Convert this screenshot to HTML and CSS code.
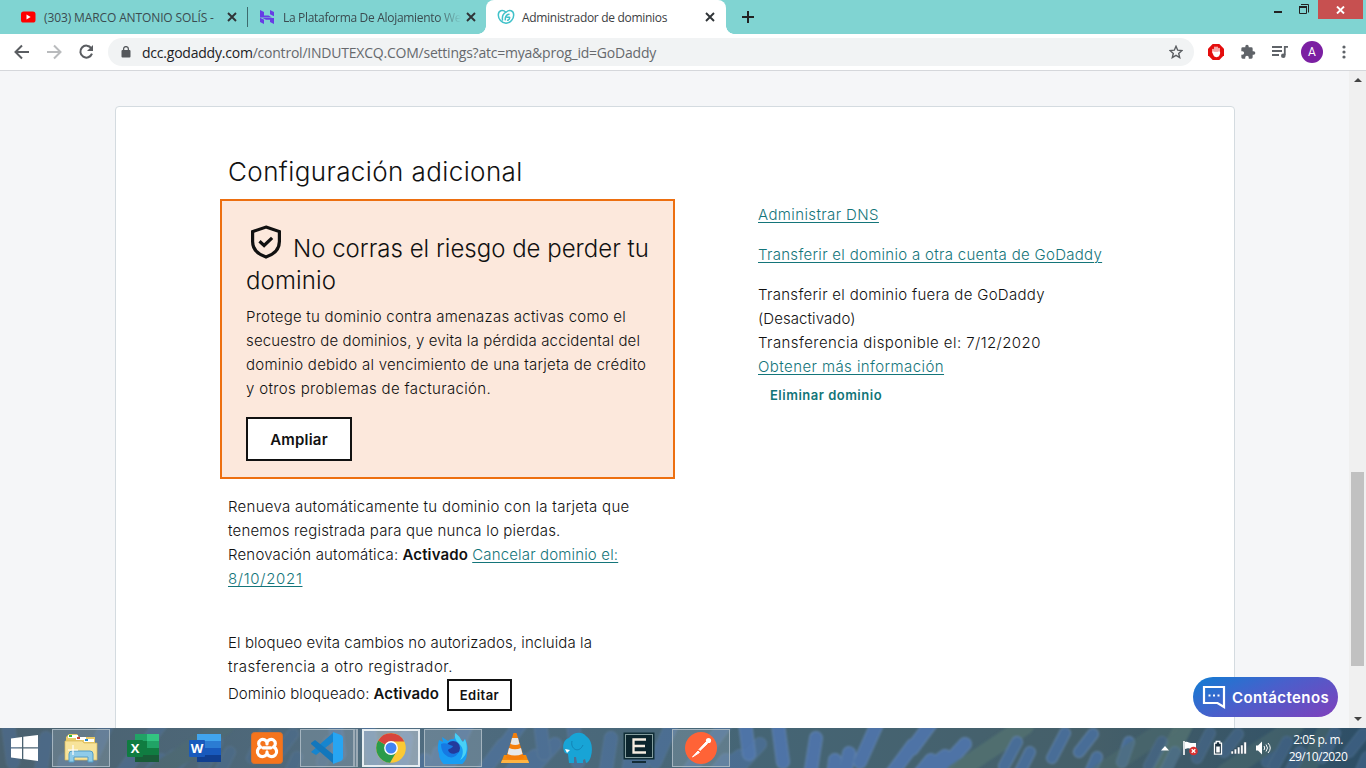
FILE: index.html
```html
<!DOCTYPE html>
<html lang="es">
<head>
<meta charset="utf-8">
<title>Administrador de dominios</title>
<link rel="stylesheet" href="styles.css">
</head>
<body>
<div class="screen">
  <header class="tabstrip">
    <div class="tab tab-one">
      <svg class="fav" width="16" height="16" viewBox="0 0 16 16"><rect x="1" y="2.500" width="14.500" height="11" rx="2.600" fill="#f00"/><path d="M6.500 5.600v4.800L10.700 8z" fill="#fff"/></svg>
      <span class="tab-title t1">(303) MARCO ANTONIO SOLÍS -</span>
      <svg class="x" width="10" height="10" viewBox="0 0 10 10"><path d="M1 1l8 8M9 1l-8 8"/></svg>
    </div>
    <div class="tab tab-two">
      <svg class="fav" width="16" height="16" viewBox="0 0 16 16" fill="#673de6"><path d="M1 1l4 2v3.500h4.500L13 8.400H1zM11 1l4 2v4.300l-4-2zM1 8.800l4 2V15l-4-2zM3.500 8.900H15V15l-4-2v-2.300H7z"/></svg>
      <span class="tab-title fade t2">La Plataforma De Alojamiento We</span>
      <svg class="x" width="10" height="10" viewBox="0 0 10 10"><path d="M1 1l8 8M9 1l-8 8"/></svg>
    </div>
    <div class="tab tab-active">
      <svg class="fav" width="18" height="16" viewBox="0 0 18 16" fill="none" stroke="#3fc1c9" stroke-width="1.500" stroke-linecap="round" stroke-linejoin="round"><path d="M9 14.300C4.500 14 1.300 10 1.300 6 1.300 1.500 5.500.200 9 3.200 12.500.200 16.700 1.500 16.700 6c0 4-3.200 8-7.700 8.300M5.500 11C5 7.500 6.500 4.500 9 3.200M12 5.300C9.300 5.500 8 8 8.300 10.800M10 8.200h2.600c.2 1.600-.6 2.700-2 3"/></svg>
      <span class="tab-title t3">Administrador de dominios</span>
      <svg class="x" width="10" height="10" viewBox="0 0 10 10"><path d="M1 1l8 8M9 1l-8 8"/></svg>
    </div>
    <svg class="plus" width="12" height="12" viewBox="0 0 12 12"><path d="M6 0v12M0 6h12" stroke="#222" stroke-width="2"/></svg>
    <div class="winctl">
      <svg width="36" height="19" viewBox="0 0 36 19" fill="none" stroke="#222"><path d="M0 12h8" stroke-width="2"/><path d="M27 4.500h7.500v8M25.500 6.500h7v7h-7z"/><path d="M25 7h8" stroke-width="2"/></svg>
      <div class="winclose"><svg width="9" height="8" viewBox="0 0 9 8"><path d="M1 .5l7 7M8 .5l-7 7" stroke="#fff" stroke-width="1.900"/></svg></div>
    </div>
  </header>

  <div class="toolbar">
    <svg class="nav" width="16" height="16" viewBox="0 0 16 16"><path d="M15 8H2M8 1.500L1.500 8 8 14.500" fill="none" stroke="#5a5d61" stroke-width="2"/></svg>
    <svg class="nav" width="16" height="16" viewBox="0 0 16 16"><path d="M1 8h13M8 1.500L14.500 8 8 14.500" fill="none" stroke="#b9bbbd" stroke-width="2"/></svg>
    <svg class="nav" width="16" height="16" viewBox="0 0 16 16"><path d="M13.300 4.200A6 6 0 1 0 14 9.700" fill="none" stroke="#5a5d61" stroke-width="2"/><path d="M15 1v6H9z" fill="#5a5d61"/></svg>
    <div class="omnibox">
      <svg width="10" height="12" viewBox="0 0 10 12"><rect x=".5" y="4" width="9" height="7.500" rx="1" fill="#55585c"/><path d="M2.600 4.500V3a2.400 2.400 0 0 1 4.800 0v1.500" fill="none" stroke="#55585c" stroke-width="1.300"/></svg>
      <span class="url"><b>dcc.godaddy.com</b>/control/INDUTEXCQ.COM/settings?atc=mya&amp;prog_id=GoDaddy</span>
      <svg class="star" width="14" height="14" viewBox="0 0 14 14"><path d="M7 1.300l1.700 3.900 4.200.4-3.200 2.800 1 4.200L7 10.400l-3.700 2.200 1-4.200L1.100 5.600l4.200-.4z" fill="none" stroke="#5a5d61" stroke-width="1.400"/></svg>
    </div>
    <div class="exts">
      <svg width="16" height="16" viewBox="0 0 16 16"><path d="M4.700 0h6.600L16 4.700v6.600L11.300 16H4.700L0 11.300V4.700z" fill="#e40d0d"/><path d="M5 8.500V5.500M7 7V3.200M9 7V3.200M11 8V4.500" stroke="#fff" stroke-width="1.300" stroke-linecap="round"/><path d="M4.400 7.500h7.300c.8.500.6 2.500-.6 4.500-1 1.500-4.200 1.500-5.200 0-1-1.500-1.500-3-1.500-4.500z" fill="#fff"/></svg>
      <svg width="16" height="16" viewBox="0 0 24 24"><path fill="#5f6368" d="M20.500 11H19V7a2 2 0 0 0-2-2h-4V3.500a2.500 2.500 0 0 0-5 0V5H4a2 2 0 0 0-2 2v3.800h1.500a2.700 2.700 0 0 1 0 5.400H2V20a2 2 0 0 0 2 2h3.800v-1.500a2.700 2.700 0 0 1 5.400 0V22H17a2 2 0 0 0 2-2v-4h1.500a2.500 2.500 0 0 0 0-5z"/></svg>
      <svg width="16" height="14" viewBox="0 0 16 14"><path d="M0 2h10M0 6h10M0 10h7M12.800 10V1.800H16" fill="none" stroke="#5f6368" stroke-width="1.800"/><circle cx="11.300" cy="10.700" r="2.300" fill="#5f6368"/></svg>
      <span class="avatar">A</span>
      <svg class="dots" width="4" height="14" viewBox="0 0 4 14" fill="#5f6368"><circle cx="2" cy="2" r="1.600"/><circle cx="2" cy="7" r="1.600"/><circle cx="2" cy="12" r="1.600"/></svg>
    </div>
  </div>

  <main class="viewport">
    <div class="page">
      <section class="card">
        <div class="col-left">
          <h1>Configuración adicional</h1>
          <div class="callout">
            <h2><svg class="shield" width="32" height="34" viewBox="0 0 32 34" fill="none" stroke="#111" stroke-width="3.200"><path d="M16 2.100L29.400 6.600v9.800c0 7.400-5.200 12.800-13.400 15.600C7.800 29.200 2.600 23.800 2.600 16.400V6.600z"/><path d="M9.500 16.300l4.600 4.200 8-7.700"/></svg>No corras el riesgo de perder tu<br><span class="h2b">dominio</span></h2>
            <p><span class="p1">Protege tu dominio contra amenazas activas como el</span><br><span class="p2">secuestro de dominios, y evita la pérdida accidental del</span><br><span class="p3">dominio debido al vencimiento de una tarjeta de crédito</span><br><span class="p4">y otros problemas de facturación.</span></p>
            <button class="btn-lg">Ampliar</button>
          </div>
          <p class="renew"><span class="r1">Renueva automáticamente tu dominio con la tarjeta que</span><br><span class="r2">tenemos registrada para que nunca lo pierdas.</span><br><span class="r3">Renovación automática:</span> <b class="r4">Activado</b> <a class="r5">Cancelar dominio el:</a><br><a class="r6">8/10/2021</a></p>
          <p class="lock"><span class="l1">El bloqueo evita cambios no autorizados, incluida la</span><br><span class="l2">trasferencia a otro registrador.</span></p>
          <div class="lockrow"><span class="l3">Dominio bloqueado:</span><b class="r4">Activado</b><button class="btn-sm">Editar</button></div>
        </div>
        <div class="col-right">
          <p><a class="d1">Administrar DNS</a></p>
          <p><a class="d2">Transferir el dominio a otra cuenta de GoDaddy</a></p>
          <p class="last"><span class="d2">Transferir el dominio fuera de GoDaddy</span><br><span class="d4">(Desactivado)</span><br><span class="d5">Transferencia disponible el: 7/12/2020</span><br><a class="d5">Obtener más información</a></p>
          <span class="del">Eliminar dominio</span>
        </div>
      </section>
      <div class="contact"><svg width="24" height="24" viewBox="0 0 24 24" fill="none" stroke="#fff" stroke-width="2.200"><path d="M22 2H2v16h13.500l6.500 4z"/><path d="M6.500 10.500h2M11 10.500h2M15.500 10.500h2" stroke-width="2"/></svg><span>Contáctenos</span></div>
    </div>
    <div class="scrollbar"><i class="arrow up"></i><div class="thumb"></div><i class="arrow down"></i></div>
  </main>

  <footer class="taskbar">
    <svg class="reef" width="1366" height="40" viewBox="0 0 1366 40">
      <defs>
        <filter id="soft" x="-5%" y="-50%" width="110%" height="200%"><feGaussianBlur stdDeviation=".8"/></filter>
        <linearGradient id="sea"><stop offset="0" stop-color="#4a616f"/><stop offset=".3" stop-color="#506c80"/><stop offset=".55" stop-color="#456575"/><stop offset=".8" stop-color="#455f69"/><stop offset="1" stop-color="#2d4e66"/></linearGradient>
        <g id="fronds" fill="none" stroke-linecap="round"><path stroke="#6587b2" stroke-width="14" d="M5-6l4 32M38-4l5 38M76 10l-6 38M95 32l-3 24M109 25l-5 26M138-6l-18 40M173 17l-26 35M192-6l-20 27M191 32l-14 17M225 16l-24 26M205 28l-26 20"/><path stroke="#4f76ac" stroke-width="12" d="M5-6l4 32M38-4l5 38M76 10l-6 38M95 32l-3 24M109 25l-5 26M138-6l-18 40M173 17l-26 35M192-6l-20 27M191 32l-14 17M225 16l-24 26M205 28l-26 20"/></g>
        <g id="sparse" fill="none" stroke-linecap="round"><path stroke="#517070" stroke-width="18" d="M-25 45L45-2M180 45l25-50"/><path stroke="#6688ad" stroke-width="12" d="M37 14L24 38M50 24L40 44M85 5L72 30M113 6l-14 18M117 29l-9 20M149 14l-7 20"/><path stroke="#496f9c" stroke-width="10" d="M37 14L24 38M50 24L40 44M85 5L72 30M113 6l-14 18M117 29l-9 20M149 14l-7 20"/></g>
      </defs>
      <rect width="1366" height="40" fill="url(#sea)"/>
      <g filter="url(#soft)">
      <g opacity=".35"><use href="#fronds" x="-30"/><use href="#sparse" x="180"/></g>
      <g opacity=".5"><use href="#fronds" x="330"/><use href="#fronds" x="535"/></g>
      <use href="#fronds" x="740" opacity=".9"/><use href="#sparse" x="980" opacity=".9"/>
      <g opacity=".45"><use href="#sparse" x="1125"/><use href="#sparse" x="1250"/></g>
      </g>
    </svg>
    <div class="start"><svg width="27" height="26" viewBox="0 0 27 26" fill="#fff"><path d="M0 3.500L11 2v10.300H0zM12.300 1.800L27 0v12.300H12.300zM0 13.500h11V24L0 22.500zM12.300 13.500H27V26l-14.700-1.900z"/></svg></div>
    <div class="tasks">
      <div class="task open"><svg width="34" height="32" viewBox="0 0 34 32"><path d="M2 5l3-3h8l2 3h16v23H2z" fill="#e9cb68"/><path d="M4 3h10v3H4z" fill="#fff"/><path d="M5 3h3v2H5z" fill="#3b3"/><path d="M12 5h10v3H12z" fill="#fff"/><path d="M13 5h3v2h-3z" fill="#c43"/><path d="M20 7h10v3H20z" fill="#fff"/><path d="M21 7h3v2h-3z" fill="#28c"/><path d="M1 9h17l2 2h13v17H1z" fill="#f7e39a" stroke="#d9b85a" stroke-width=".7"/><path d="M5 30v-8q0-3 3-3h18q3 0 3 3v8h-5v-5H10v5z" fill="#8fcbe8" stroke="#539cc6"/><path d="M9 13v10M4 18h10" stroke="#fff" stroke-width="1.200"/></svg></div>
      <div class="task"><svg width="32" height="30" viewBox="0 0 32 30"><path d="M8 1h12v9H8z" fill="#21a366"/><path d="M20 1h12v7H20z" fill="#33c481"/><path d="M8 8h12v14H8z" fill="#107c41"/><path d="M20 8h12v7H20z" fill="#21a366"/><path d="M20 15h12v7H20z" fill="#107c41"/><path d="M8 22h24v7H8z" fill="#185c37"/><rect y="7" width="16" height="17" rx="1" fill="#107c41"/><text x="8" y="20" text-anchor="middle" class="office">X</text></svg></div>
      <div class="task"><svg width="32" height="30" viewBox="0 0 32 30"><path d="M8 1h24v7H8z" fill="#41a5ee"/><path d="M8 8h24v7H8z" fill="#2b7cd3"/><path d="M8 15h24v7H8z" fill="#185abd"/><path d="M8 22h24v7H8z" fill="#103f91"/><rect y="7" width="16" height="17" rx="1" fill="#185abd"/><text x="8" y="20" text-anchor="middle" class="office">W</text></svg></div>
      <div class="task"><svg width="32" height="32" viewBox="0 0 32 32"><rect x=".5" y=".5" width="31" height="31" rx="3" fill="#f5741c" stroke="#d7722e"/><path d="M9.500 15a4.200 4.200 0 1 1 6.500-4.200A4.200 4.200 0 1 1 22.500 15M12 15.800h8M9.500 15a5 5 0 1 0 6.500 6.500A5 5 0 1 0 22.500 15M16 10.800v1.200M16 20v1.500" fill="none" stroke="#fff" stroke-width="3.200" stroke-linecap="round"/></svg></div>
      <div class="task open stacked"><svg width="32" height="32" viewBox="0 0 32 32"><path d="M23 0v9L5 23l-5-3z" fill="#1685cf"/><path d="M0 11l4-3 19 15v9L0 12z" fill="#1277bd"/><path d="M22 0l8 3q2 1 2 3v20q0 2-2 3l-8 3z" fill="#27a5f2"/></svg></div>
      <div class="task open current"><svg width="30" height="30" viewBox="0 0 30 30"><circle cx="15" cy="15" r="14.800" fill="#fbc934"/><path d="M15 15L2.200 7.600A14.800 14.800 0 0 0 14 29.800l7-12z" fill="#2b9b4b"/><path d="M15 15L2.200 7.600A14.800 14.800 0 0 1 28.300 8.500H15z" fill="#d7443c"/><circle cx="15" cy="15" r="6.900" fill="#fff"/><circle cx="15" cy="15" r="5.500" fill="#4284f3"/></svg></div>
      <div class="task open"><svg width="32" height="32" viewBox="0 0 32 32"><path d="M2 8l4 2-1-5 6 4c2-2 4-2 6-2l2-6 4 6 3 3 2-3c3 6 3 10 2 14A14 14 0 0 1 2 22C0 17 1 12 2 8z" fill="#199df3"/><path d="M18 1c6 4 5 6 8 9l2-3c4 10 1 18-5 21 3-4 4-10 1-14-3-4-7-6-6-13z" fill="#48d0f5"/><circle cx="16" cy="16" r="7" fill="#233a9c"/><path d="M4 12c4-2 8 1 12 2-1 3-4 2-5 4 1 4 6 5 10 2-1 5-7 7-11 4-4-2-6-7-6-12z" fill="#1679e3"/></svg></div>
      <div class="task"><svg width="28" height="32" viewBox="0 0 28 32"><path d="M3 23h22l3 8H0z" fill="#f58a0b"/><path d="M1 28h26l1 3H0z" fill="#ffb443"/><path d="M12.500 1h3L23 26q-9 4-18 0z" fill="#f57f0b"/><path d="M11 6h6l1.500 6q-4 2-9 0zM8 16q6 2.500 12 0l1.500 6q-8 3-15 0z" fill="#e7e8e9"/></svg></div>
      <div class="task"><svg width="31" height="32" viewBox="0 0 31 32"><path d="M7 6C11 0 20-1 24 4c6 4 7 13 5 20-1 4-3 7-5 7l-1-4-2 1v3h-6l-1-6h-2v6H7L6 22l-3-1C-1 15 2 7 7 6z" fill="#18a4d6"/><path d="M10 9c-2 8 7 13 11 4" fill="none" stroke="#1383b5"/><path d="M3 17l5 1-3 3z" fill="#fff"/></svg></div>
      <div class="task"><svg width="32" height="32" viewBox="0 0 32 32"><rect x=".5" y=".5" width="31" height="27" fill="#102e37"/><rect x="2.500" y="2.500" width="27" height="23" fill="#0b252d" stroke="#849d9e"/><path d="M23 7.500H10.500v13H23M10.500 14H22" fill="none" stroke="#f5ece0" stroke-width="2.300"/><path d="M9 30h14" stroke="#142d37" stroke-width="2"/></svg></div>
      <div class="task open"><svg width="32" height="32" viewBox="0 0 32 32"><circle cx="16" cy="16" r="16" fill="#ff6337"/><path d="M7.500 25l5.500-6 1.500 1.500zM14 17.500l7-7.500 1.500 1.500-7.500 7z" fill="#fff" stroke="#fff"/><circle cx="23.500" cy="8.500" r="2.600" fill="#fff"/></svg></div>
    </div>
    <div class="tray">
      <svg width="8" height="5" viewBox="0 0 8 5"><path d="M0 4.500L4 0l4 4.500z" fill="#fff"/></svg>
      <svg class="flag" width="16" height="16" viewBox="0 0 16 16"><path d="M1 1v14" stroke="#fff" stroke-width="1.600"/><path d="M2 2c3-1 4 1 6 1h5v6H8C6 8 5 8 2 9z" fill="#fff"/><circle cx="10.500" cy="11" r="4.300" fill="#d93030"/><path d="M8.700 9.200l3.600 3.600M12.300 9.200l-3.600 3.600" stroke="#fff" stroke-width="1.300"/></svg>
      <svg class="battery" width="10" height="16" viewBox="0 0 10 16"><path d="M3.200 1.500h3.600v1.700H8.500v11h-7v-11h1.700z" fill="#1c313f" stroke="#fff" stroke-width="1.300"/><path d="M3.200 6.500h3.600V12.500H3.200z" fill="#fff"/></svg>
      <svg class="signal" width="16" height="12" viewBox="0 0 16 12" fill="#fff" stroke="#223746" stroke-width=".5"><path d="M0 9h2.500v3H0zM3.200 7h2.500v5H3.200zM6.400 5h2.500v7H6.400zM9.600 3h2.500v9H9.600zM12.800 0h2.700v12h-2.700z"/></svg>
      <svg class="volume" width="16" height="14" viewBox="0 0 16 14"><path d="M1 4.500h2L7 .500v13L3 9.500H1z" fill="#fff"/><path d="M9 5q1.500 2 0 4M11 3.500q3 3.500 0 7M13 2q4.500 5 0 10" fill="none" stroke="#fff" stroke-width="1"/></svg>
      <div class="clock"><span>2:05 p. m.</span><span>29/10/2020</span></div>
    </div>
  </footer>
</div>
</body>
</html>
```
FILE: styles.css
```css
* { box-sizing: border-box; }
body { margin: 0; }
svg { flex: none; display: block; }
.screen { width: 1366px; height: 768px; display: flex; flex-direction: column; overflow: hidden; font-family: Inter, "Liberation Sans", sans-serif; color: #111; }

/* Browser chrome */
.tabstrip { height: 34px; flex: none; background: #80d4d2; display: flex; align-items: stretch; font: 12px "Open Sans", sans-serif; }
.tab { display: flex; align-items: center; height: 34px; }
.tab .x { margin-left: auto; stroke: #2f3437; stroke-width: 1.900; }
.tab-title { white-space: nowrap; color: #3b4b50; letter-spacing: -.31px; }
.tab-one .t1 { letter-spacing: -.12px; }
.tab-one { width: 248px; padding: 0 11px 0 20px; background: linear-gradient(#3d6b6e, #3d6b6e) right 7px / 1px 20px no-repeat; }
.tab-one .tab-title, .tab-two .tab-title { margin-left: 8px; }
.tab-two { width: 238px; padding: 0 10px 0 11px; }
.fade { -webkit-mask-image: linear-gradient(90deg, #000 155px, transparent 178px); mask-image: linear-gradient(90deg, #000 155px, transparent 178px); }
.tab-active { width: 240px; padding: 0 11px; background: #fff; border-radius: 8px 8px 0 0; position: relative; }
.tab-active::before, .tab-active::after { content: ""; position: absolute; bottom: 0; width: 8px; height: 8px; }
.tab-active::before { left: -8px; background: radial-gradient(circle at 0 0, transparent 7.500px, #fff 8px); }
.tab-active::after { right: -8px; background: radial-gradient(circle at 100% 0, transparent 7.500px, #fff 8px); }
.tab-active .tab-title { margin-left: 7px; color: #3c4043; }
.plus { margin: 11px 0 0 16px; }
.winctl { margin-left: auto; display: flex; padding-right: 3px; }
.winclose { width: 45px; height: 19px; margin-left: 8px; background: #c75050; display: flex; align-items: center; justify-content: center; }
.toolbar { height: 37px; flex: none; border-bottom: 1px solid #d5d7db; background: #fff; display: flex; align-items: center; padding-left: 14px; }
.nav { margin-right: 16px; }
.omnibox { width: 1086px; height: 28px; margin-left: -2px; border-radius: 14px; background: #f1f3f4; display: flex; align-items: center; padding: 0 11px 0 13px; }
.url { margin-left: 11px; font: 14px "Open Sans", sans-serif; letter-spacing: -.22px; color: #66696d; white-space: nowrap; }
.url b { font-weight: 400; color: #202124; }
.star { margin-left: auto; }
.exts { display: flex; align-items: center; gap: 16px; margin-left: 14px; }
.avatar { width: 22px; height: 22px; margin-left: -3px; border-radius: 50%; background: #7b1fa2; color: #fff; font: 12px/22px Roboto, sans-serif; text-align: center; }
.dots { margin-left: 3px; }

/* Page */
.viewport { flex: 1; min-height: 0; display: flex; }
.page { flex: 1; background: #f5f6f8; padding: 35px 114px 0 115px; position: relative; overflow: hidden; }
.card { height: 640px; border: 1px solid #d4dbe0; border-radius: 4px; background: #fff; display: flex; padding: 48px 0 0 104px; }
.col-left { width: 455px; }
h1 { margin: 0 0 11px; padding-left: 8px; font-size: 26px; font-weight: 300; line-height: 33px; white-space: nowrap; letter-spacing: .4px; }
.callout { width: 455px; height: 280px; border: 2px solid #ed6f10; background: #fce8dc; padding: 24px 0 0 24px; }
h2 { margin: 0 0 8px; font-size: 24px; font-weight: 300; line-height: 32px; white-space: nowrap; padding-top: 8px; }
.shield { display: inline-block; vertical-align: -2px; margin: -8px 11px 0 4px; }
p { margin: 0; font-size: 15px; font-weight: 300; line-height: 24px; white-space: nowrap; color: #111; }
b { font-weight: 600; color: #111; }
button { font-family: inherit; border: 2px solid #111; background: #fff; color: #111; font-weight: 600; padding: 0; border-radius: 0; white-space: nowrap; display: block; }
.btn-lg { width: 106px; height: 44px; margin-top: 16px; font-size: 15px; letter-spacing: .2px; }
.renew { margin: 16px 0 40px 8px; }
.lock { margin-left: 8px; }
.lockrow { display: flex; align-items: center; margin-left: 8px; height: 32px; font-size: 15px; font-weight: 300; white-space: nowrap; }
.lockrow span, .lockrow b { padding-bottom: 3px; }
.lockrow b { margin-left: 4px; }
.btn-sm { width: 65px; height: 32px; font-size: 13px; margin-left: 8px; letter-spacing: .45px; }
a { color: #14757a; text-decoration: underline; text-underline-offset: 2px; text-decoration-thickness: 1px; }
.h2b { letter-spacing: .15px; }
.p1 { letter-spacing: .23px; }
.p2 { letter-spacing: .14px; }
.p3 { letter-spacing: .24px; }
.p4 { letter-spacing: .34px; }
.r1 { letter-spacing: .275px; }
.r2 { letter-spacing: .19px; }
.r3 { letter-spacing: .18px; }
.r4 { letter-spacing: .13px; }
.r5 { letter-spacing: .16px; }
.r6 { letter-spacing: .68px; }
.l1 { letter-spacing: .08px; }
.l2 { letter-spacing: .49px; }
.l3 { letter-spacing: .07px; }
.d1 { letter-spacing: .39px; }
.d2 { letter-spacing: .3px; }
.d4 { letter-spacing: .08px; }
.d5 { letter-spacing: .42px; }
.col-right { margin: 48px 0 0 83px; }
.col-right p { margin-bottom: 16px; }
.col-right .last { margin-bottom: 4px; }
.del { margin-left: 12px; font-size: 13px; font-weight: 600; line-height: 24px; color: #127578; white-space: nowrap; letter-spacing: .5px; }
.contact { position: absolute; right: 11px; bottom: 11px; width: 145px; height: 40px; border-radius: 20px; background: linear-gradient(155deg, #177ad2 5%, #4a5fcb 45%, #8040bc); color: #fff; display: flex; align-items: center; gap: 6px; padding-left: 9px; font-size: 15px; font-weight: 600; white-space: nowrap; letter-spacing: .4px; }
.scrollbar { width: 17px; background: #f0f0f0; display: flex; flex-direction: column; align-items: center; }
.arrow { border: 4px solid transparent; width: 0; height: 0; }
.up { border-bottom-color: #444; border-top: 0; margin-top: 7px; }
.thumb { width: 13px; height: 194px; background: #c1c1c1; margin-top: 390px; }
.down { border-top-color: #444; border-bottom: 0; margin-top: auto; margin-bottom: 7px; }

/* Taskbar */
.taskbar { height: 40px; flex: none; display: flex; position: relative; background: #49626f; }
.reef { position: absolute; left: 0; top: 0; }
.start, .tasks, .tray { position: relative; display: flex; align-items: center; }
.start { width: 52px; padding-left: 11px; }
.tasks { gap: 4px; }
.task { width: 58px; height: 40px; display: flex; align-items: center; justify-content: center; }
.open { height: 38px; border: 1px solid #a4b4bf; background: rgba(190, 205, 215, .22); }
.current { border: 2px solid #e6edf1; background: rgba(215, 225, 232, .45); }
.stacked { border-right: 5px double #9baab5; }
.office { font: 700 13px "Open Sans", sans-serif; fill: #fff; }
.tray { margin-left: auto; padding-right: 18px; }
.flag { margin-left: 14px; }
.battery { margin-left: 14px; }
.signal, .volume { margin-left: 8px; }
.clock { width: 60px; display: flex; flex-direction: column; align-items: center; font: 12px/17px "Open Sans", sans-serif; letter-spacing: -.5px; color: #fff; margin-left: 17px; }
```
